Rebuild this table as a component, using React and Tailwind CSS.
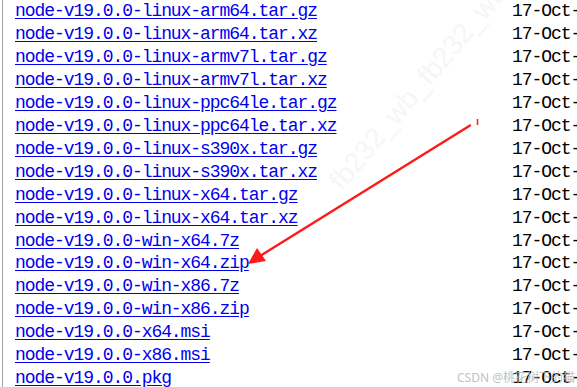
const FILES = [
  'node-v19.0.0-linux-arm64.tar.gz',
  'node-v19.0.0-linux-arm64.tar.xz',
  'node-v19.0.0-linux-armv7l.tar.gz',
  'node-v19.0.0-linux-armv7l.tar.xz',
  'node-v19.0.0-linux-ppc64le.tar.gz',
  'node-v19.0.0-linux-ppc64le.tar.xz',
  'node-v19.0.0-linux-s390x.tar.gz',
  'node-v19.0.0-linux-s390x.tar.xz',
  'node-v19.0.0-linux-x64.tar.gz',
  'node-v19.0.0-linux-x64.tar.xz',
  'node-v19.0.0-win-x64.7z',
  'node-v19.0.0-win-x64.zip',
  'node-v19.0.0-win-x86.7z',
  'node-v19.0.0-win-x86.zip',
  'node-v19.0.0-x64.msi',
  'node-v19.0.0-x86.msi',
  'node-v19.0.0.pkg',
];

function Arrow() {
  // red annotation pointing at the win-x64 zip
  return (
    <svg className="pointer-events-none absolute inset-0 z-20" width="577" height="387">
      <line x1="477.5" y1="119" x2="477.5" y2="125" stroke="#ff1a1a" strokeWidth="1.5" />
      <line x1="470" y1="125.5" x2="260" y2="256" stroke="#ff1a1a" strokeWidth="2.4" strokeLinecap="round" />
      <polygon points="248,264 257,248 266,261" fill="#ff1a1a" />
    </svg>
  );
}

export default function App() {
  return (
    <div className="relative h-[387px] w-[577px] overflow-hidden bg-white">
      {/* faint diagonal watermark, behind the listing */}
      <span className="pointer-events-none absolute left-[335px] top-[165px] z-0 origin-left -rotate-[50deg] whitespace-nowrap font-['Liberation_Sans',sans-serif] text-[28px] text-[#f6f6f6]">
        fb232_wb_fb232_wb
      </span>

      <div className="relative z-10 ml-[2px] h-full border-l border-[#a3a3a3] pl-[12px] font-['Liberation_Mono',monospace] text-[18px] leading-[22.95px] tracking-[-1.06px]">
        {FILES.map((name) => (
          <div key={name} className="flex whitespace-nowrap">
            <div className="w-[497px] shrink-0">
              <a href="#" className="text-[#0000ee] underline underline-offset-[2px]">
                {name}
              </a>
            </div>
            <span className="text-black">17-Oct-2022 16:04</span>
          </div>
        ))}
      </div>

      <Arrow />

      <span className="pointer-events-none absolute left-[457px] top-[369px] z-20 whitespace-nowrap font-['Noto_Sans','Noto_Sans_CJK_SC',sans-serif] text-[12px] text-[#b8b8b8]/90">
        CSDN @桃花树下的猫
      </span>
    </div>
  );
}
